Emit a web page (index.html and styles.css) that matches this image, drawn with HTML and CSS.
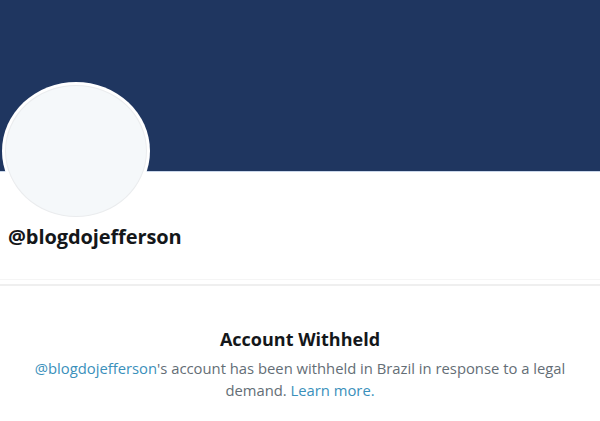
FILE: index.html
```html
<!DOCTYPE html>
<html>
<head>
<meta charset="utf-8">
<link rel="stylesheet" href="styles.css">
</head>
<body>
<div class="page">
  <div class="banner"></div>
  <div class="profile">
    <div class="avatar"><div class="avatar-inner"></div></div>
    <div class="handle">@blogdojefferson</div>
  </div>
  <div class="divider"></div>
  <div class="withheld">
    <h2 class="title">Account Withheld</h2>
    <p class="message"><span class="link">@blogdojefferson</span>'s account has been withheld in Brazil in response to a legal demand. <span class="link">Learn more.</span></p>
  </div>
</div>
</body>
</html>
```
FILE: styles.css
```css
html, body {
  margin: 0;
  padding: 0;
  background: #ffffff;
}
.page {
  width: 600px;
  height: 421px;
  overflow: hidden;
  font-family: "Open Sans", "Noto Sans", sans-serif;
}
.banner {
  height: 172px;
  background: #1f3660;
  border-bottom: 1px solid #c9d6ea;
  box-sizing: border-box;
}
.profile {
  padding-left: 2px;
}
.avatar {
  width: 148px;
  height: 138px;
  margin-top: -90px;
  border-radius: 50%;
  background: #ffffff;
  padding: 3px;
  box-sizing: border-box;
}
.avatar-inner {
  width: 100%;
  height: 100%;
  border-radius: 50%;
  background: #f5f8fa;
  border: 1px solid #eaecee;
  box-sizing: border-box;
}
.handle {
  margin-top: 5px;
  padding-left: 6px;
  font-size: 20px;
  font-weight: 700;
  color: #14171a;
  line-height: 24px;
  letter-spacing: -0.1px;
}
.divider {
  margin-top: 30px;
  height: 4px;
  border-top: 1px solid #f5f5f5;
  border-bottom: 2px solid #efefef;
}
.withheld {
  text-align: center;
  padding: 0 30px;
}
.title {
  margin: 41px 0 0;
  font-size: 18px;
  font-weight: 700;
  color: #14171a;
  line-height: 24px;
}
.message {
  margin: 6px 0 0;
  font-size: 14.8px;
  line-height: 22px;
  color: #646e76;
}
.link {
  color: #3a90bb;
}
```
